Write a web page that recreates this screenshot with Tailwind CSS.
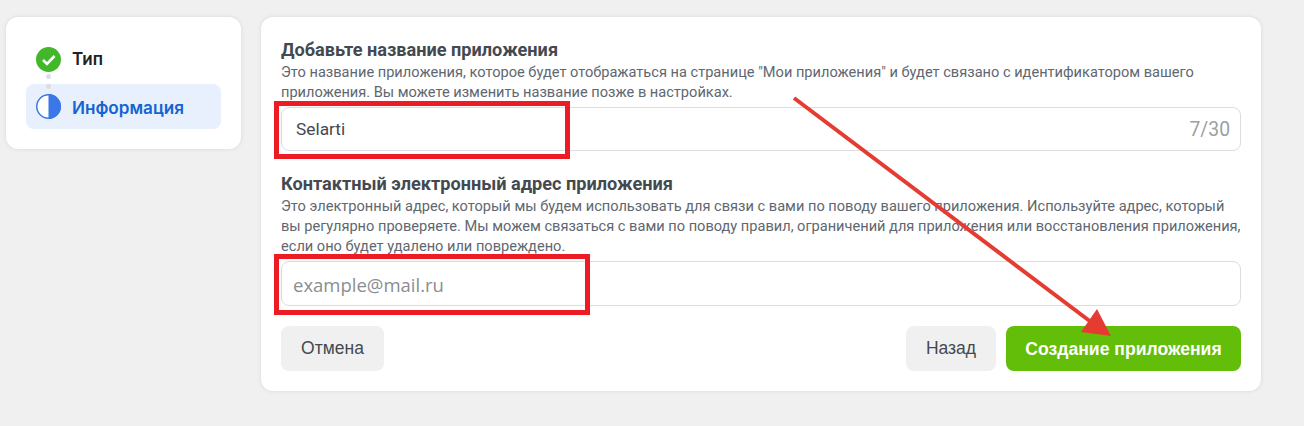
<!DOCTYPE html>
<html lang="ru">
  <head>
    <meta charset="UTF-8" />
    <title>Создание приложения</title>
    <script src="https://cdn.jsdelivr.net/npm/@tailwindcss/browser@4"></script>
  </head>
  <body class="relative h-[426px] w-[1304px] overflow-hidden bg-[#f0f0f0] font-['Roboto',sans-serif]">
    <div class="flex items-start gap-5 pl-1.5 pt-[17px]">
      <!-- steps -->
      <aside class="h-[132px] w-[235px] rounded-xl bg-white px-5 pt-5 shadow-[0_0_4px_rgba(0,0,0,0.1)]">
        <div class="flex h-[44px] items-center gap-[11px] pl-2.5 font-['Inter',sans-serif] text-[17px] font-semibold text-[#222]">
          <svg width="25" height="25" viewBox="0 0 25 25">
            <circle cx="12.5" cy="12.5" r="12.5" fill="#42b72a" />
            <path d="M7 13l4 4 7.5-8" fill="none" stroke="#fff" stroke-width="2.6" />
          </svg>
          <span class="pt-0.5">Тип</span>
        </div>
        <div class="relative mt-[3px] flex h-[45px] items-center gap-[11px] rounded-lg bg-[#e7f0fc] pl-2.5 font-['Inter',sans-serif] text-[17.1px] font-semibold text-[#1464d2]">
          <span class="absolute -top-[10px] left-[19.5px] flex flex-col gap-[5px]">
            <i class="size-[5px] rounded-full bg-[#dadde1]"></i>
            <i class="size-[5px] rounded-full bg-[#dadde1]"></i>
          </span>
          <svg width="25" height="25" viewBox="0 0 25 25">
            <circle cx="12.5" cy="12.5" r="11.75" fill="#fff" stroke="#3b78e7" stroke-width="1.5" />
            <path d="M12.5 0a12.5 12.5 0 0 1 0 25z" fill="#3b78e7" />
          </svg>
          <span class="pt-0.5">Информация</span>
        </div>
      </aside>

      <!-- form -->
      <main class="h-[374px] w-[1000px] rounded-xl bg-white px-5 pt-[23px] shadow-[0_0_4px_rgba(0,0,0,0.1)]">
        <h2 class="text-[18.15px]/5 font-bold text-[#444950]">Добавьте название приложения</h2>
        <p class="mt-[2px] text-[14.6px]/5 text-[#606770]">Это название приложения, которое будет отображаться на странице "Мои приложения" и будет связано с идентификатором вашего приложения. Вы можете изменить название позже в настройках.</p>
        <div class="mt-[5px] flex h-[44px] items-center justify-between rounded-lg border border-[#dadde1] pl-3.5 pr-2.5 text-[17.3px] text-[#444950]">
          <span class="pt-0.5">Selarti</span>
          <span class="pt-0.5 text-[19.3px] text-[#9a9fa6]">7/30</span>
        </div>

        <h2 class="mt-[23px] text-[18.15px]/5 font-bold text-[#444950]">Контактный электронный адрес приложения</h2>
        <p class="mt-[2px] text-[14.6px]/5 text-[#606770]">Это электронный адрес, который мы будем использовать для связи с вами по поводу вашего приложения. Используйте адрес, который вы регулярно проверяете. Мы можем связаться с вами по поводу правил, ограничений для приложения или восстановления приложения, если оно будет удалено или повреждено.</p>
        <div class="mt-[5px] flex h-[45px] items-center rounded-lg border border-[#dadde1] pl-[11px] pt-0.5 font-['Open_Sans',sans-serif] text-[18.5px] text-[#8a8d91]">example@mail.ru</div>

        <div class="mt-5 flex h-[45px] items-stretch gap-2.5 font-['Liberation_Sans',sans-serif] text-[17.5px] text-[#444950]">
          <button class="mr-auto w-[103px] rounded-lg bg-[#f0f0f0]">Отмена</button>
          <button class="w-[90px] rounded-lg bg-[#f0f0f0]">Назад</button>
          <button class="w-[235px] rounded-lg bg-[#63be09] pt-px text-[17.6px] font-bold text-white">Создание приложения</button>
        </div>
      </main>
    </div>

    <!-- annotations drawn on top of the screenshot -->
    <div class="absolute left-[274px] top-[101px] h-[58px] w-[296px] border-[5px] border-[#ed1c24]"></div>
    <div class="absolute left-[274px] top-[254px] h-[61px] w-[316px] border-[5px] border-[#ed1c24]"></div>
    <svg class="absolute left-0 top-0" width="1304" height="426" viewBox="0 0 1304 426">
      <path d="M794 98L1095 325" stroke="#e53c32" stroke-width="4" />
      <path d="M1097 309L1111 336L1081 332z" fill="#e53c32" />
    </svg>
  </body>
</html>
